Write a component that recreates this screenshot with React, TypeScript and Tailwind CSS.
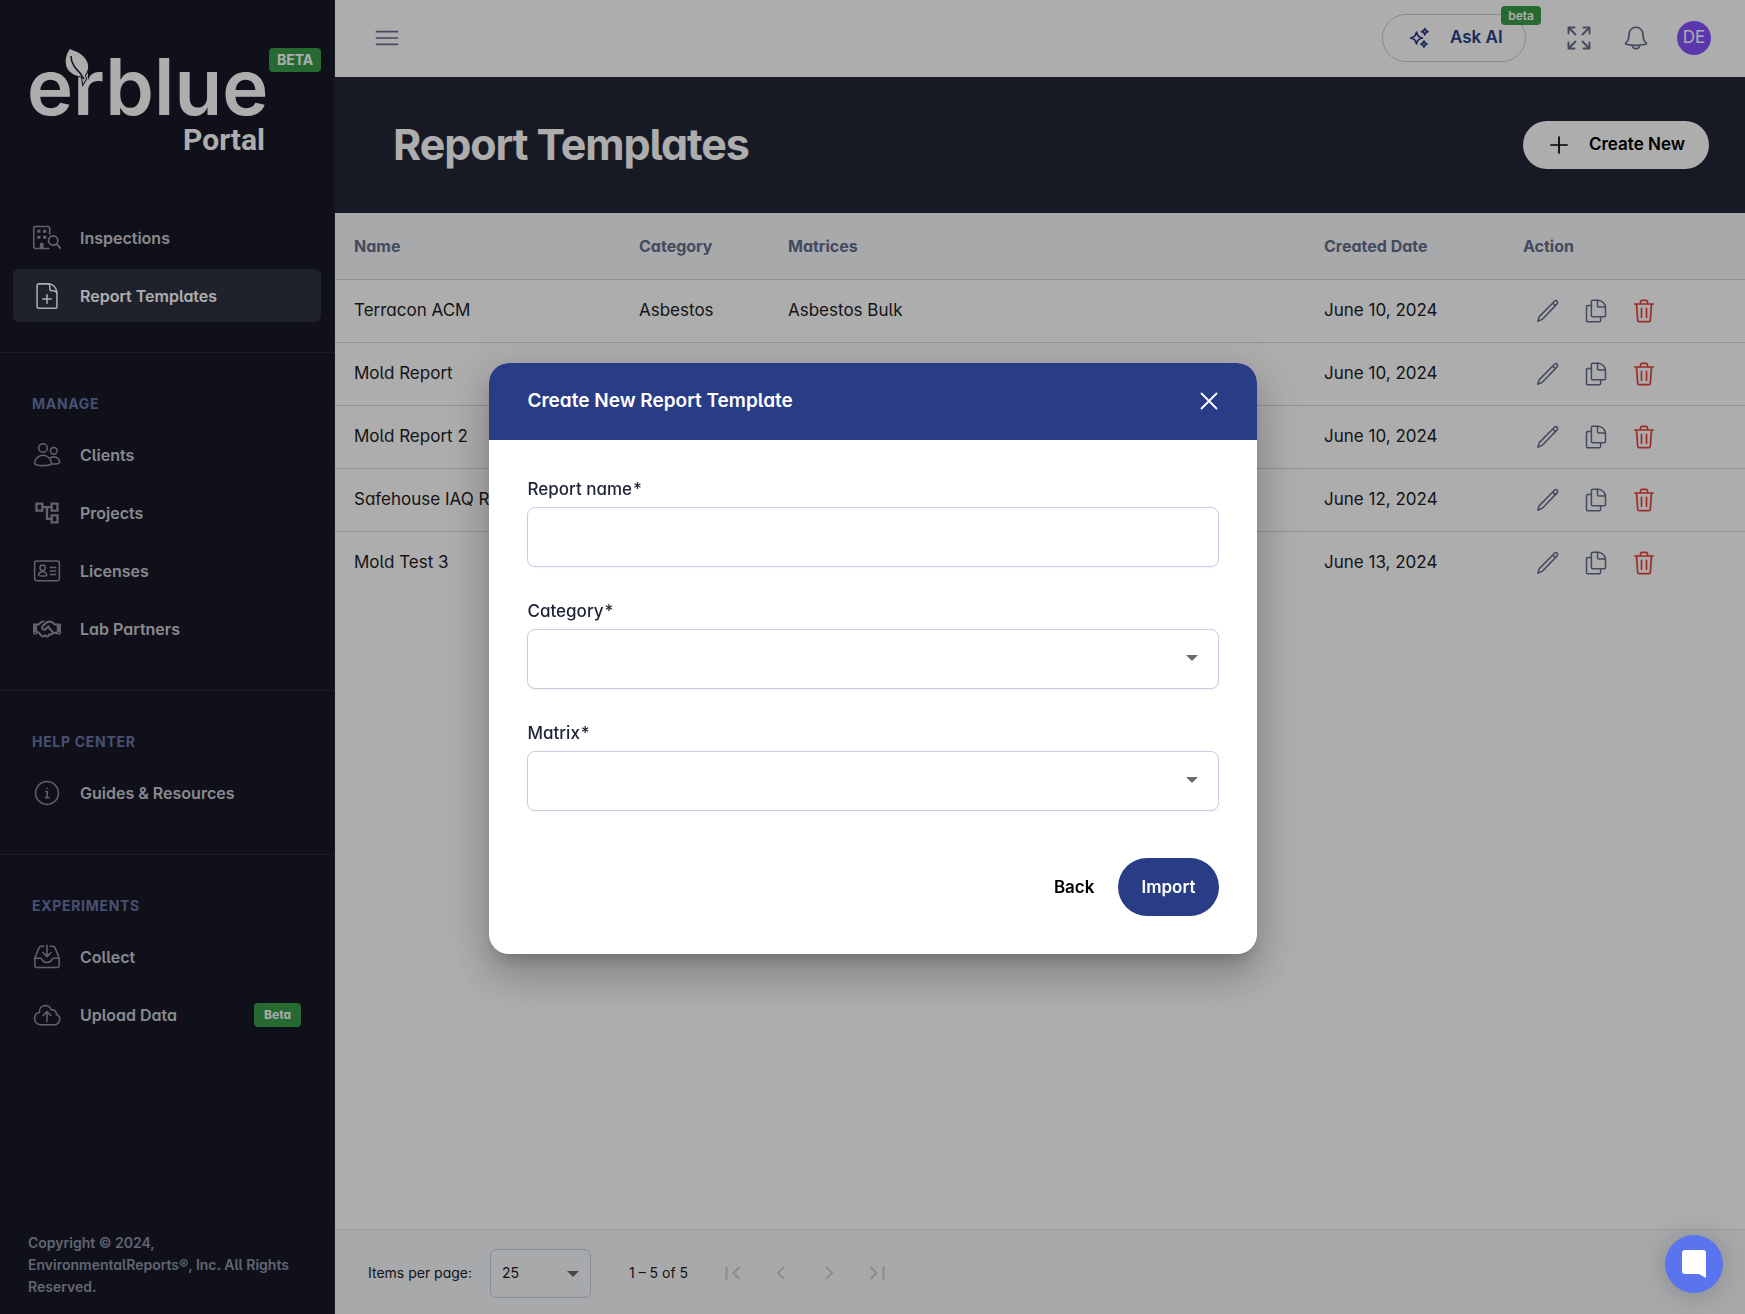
import React from "react";
import { FaRegHandshake } from "react-icons/fa6";
import { MdOutlineAccountTree } from "react-icons/md";

type IconProps = { className?: string; children?: React.ReactNode };

function Icon({ className = "size-6", children }: IconProps) {
  return (
    <svg
      viewBox="0 0 24 24"
      className={className}
      fill="none"
      stroke="currentColor"
      strokeWidth="1.3"
      strokeLinecap="round"
      strokeLinejoin="round"
      aria-hidden="true"
    >
      {children}
    </svg>
  );
}

function BuildingSearchIcon() {
  return (
    <Icon className="size-7">
      <path d="M13.600 21H2.100a1.500 1.500 0 0 1-1.500-1.500V3.600a1.500 1.500 0 0 1 1.500-1.500h10.700a1.500 1.500 0 0 1 1.500 1.500v5" strokeWidth="1.400" />
      <path d="M3.600 5h2.800v2.600H3.600zM8.600 5h2.800v2.600H8.600zM3.600 10h2.800v2.600H3.600zM8.600 10h2.800v2.600H8.600zM5.800 21v-3.500a1.700 1.700 0 0 1 3.400 0V21z" fill="currentColor" stroke="none" />
      <circle cx="17.300" cy="14.200" r="4" strokeWidth="1.500" />
      <path d="m20.300 17.200 3.200 3.400" strokeWidth="1.700" />
    </Icon>
  );
}

function DocumentPlusIcon() {
  return (
    <Icon className="size-7">
      <path d="M13.500 1.600H5a1.500 1.500 0 0 0-1.500 1.500v17.800A1.500 1.500 0 0 0 5 22.400h14a1.500 1.500 0 0 0 1.500-1.500V9.500c0-4.500-3.500-7.900-7-7.900z" />
      <path d="M13 1.600c1 .4 1.400 1 1.400 2.200v2a1.600 1.600 0 0 0 1.600 1.600h1.500c1.800 0 2.600.8 3 2.200M12 11v7.200M8.400 14.600h7.200" />
    </Icon>
  );
}

function ClientsIcon() {
  return (
    <Icon className="size-7">
      <circle cx="8.600" cy="6" r="3.700" />
      <circle cx="17.800" cy="8.400" r="2.900" />
      <path d="M1.400 19.300c0-4 3.200-7 7.200-7s7.200 3 7.200 7c0 1-3.200 1.800-7.200 1.800s-7.200-.8-7.200-1.800zM14.200 14.800c1.100-.9 2.300-1.200 3.600-1.200 2.800 0 5 2.100 5 4.800 0 .9-2.900 1.600-7.100 1.300" />
    </Icon>
  );
}

function LicenseIcon() {
  return (
    <Icon className="size-7">
      <rect x="1.400" y="3.500" width="21.200" height="16.800" rx="1.800" />
      <circle cx="8.300" cy="9.200" r="2.300" />
      <path d="M4.800 15.600c0-1.800 1.500-2.900 3.500-2.900s3.500 1.100 3.500 2.900c0 .9-7 .9-7 0zM14.800 9h4.500M14.800 12h4.500M14.800 15h4.500" />
    </Icon>
  );
}

function InfoIcon() {
  return (
    <Icon className="size-7">
      <circle cx="12" cy="12" r="9.800" />
      <path d="M11 10.800h1.200v5M10.700 16h3" />
      <circle cx="12" cy="8" r=".7" fill="currentColor" stroke="none" />
    </Icon>
  );
}

function CollectIcon() {
  return (
    <Icon className="size-7">
      <path d="M9.200 2.800H6.800c-.8 0-1.300.4-1.600 1.200L1.600 12.600v6.700a1.700 1.700 0 0 0 1.700 1.700h17.400a1.700 1.700 0 0 0 1.700-1.700v-6.700L18.800 4c-.3-.8-.8-1.200-1.600-1.200h-2.400" />
      <path d="M1.800 13h4.600c1 0 1.200.5 1.500 1.400.5 1.500 1.600 2.300 4.100 2.300s3.600-.8 4.100-2.300c.3-.9.500-1.400 1.500-1.400h4.600M12 2v9.600M8.500 8.200l3.500 3.500 3.500-3.500" />
    </Icon>
  );
}

function CloudUploadIcon() {
  return (
    <Icon className="size-7">
      <path d="M6.200 20.300h11.600a4.700 4.700 0 0 0 2.200-9c.2-2.700-2.300-4.300-4.300-3.600C14.700 5 12.600 3.600 10.300 3.800c-3.200.3-5 3-4.800 6-2.500.4-4.100 2.600-4.100 5.100 0 3 2 5.400 4.800 5.400zM12 17.500V9.200M8.700 12.400 12 9.100l3.300 3.300" />
    </Icon>
  );
}

function MenuIcon() {
  return (
    <Icon className="size-[26px]">
      <path d="M2.300 6.200h19.400M2.300 12h19.400M2.300 17.800h19.400" strokeWidth="1.600" />
    </Icon>
  );
}

function SparklesIcon() {
  return (
    <Icon>
      <path d="M9.500 6c.9 4 2 5.100 6 6-4 .9-5.100 2-6 6-.9-4-2-5.100-6-6 4-.9 5.100-2 6-6zM17.800 2.500c.4 2 1.200 2.800 3.200 3.200-2 .4-2.800 1.200-3.200 3.200-.4-2-1.200-2.800-3.200-3.200 2-.4 2.800-1.200 3.200-3.200zM17 15c.4 2 1.100 2.700 3 3.100-1.900.4-2.600 1.100-3 3-.4-1.900-1.100-2.600-3-3 1.900-.4 2.600-1.100 3-3.100z" strokeWidth="1.700" />
    </Icon>
  );
}

function ExpandIcon() {
  return (
    <Icon>
      <path d="M1.500 7.500v-6h6M1.500 1.500 8.500 8.500M16.500 1.500h6v6M22.500 1.500l-7 7M1.500 16.500v6h6M1.500 22.500l7-7M22.500 16.500v6h-6M22.500 22.500l-7-7" strokeWidth="1.900" />
    </Icon>
  );
}

function BellIcon() {
  return (
    <Icon>
      <path d="M12 1.300c-4.400 0-7 3.300-7 7.300 0 4.500-.8 6.700-3.200 8.400-.6.500-.4 1 .4 1.200 6 1.400 13.600 1.400 19.600 0 .8-.2 1-.7.400-1.200C19.800 15.300 19 13.100 19 8.600c0-4-2.600-7.300-7-7.300zM8.200 19.400c.4 2.300 1.800 3.300 3.800 3.300s3.400-1 3.800-3.300" strokeWidth="1.600" />
    </Icon>
  );
}

function PencilIcon() {
  return (
    <Icon>
      <path d="M1.800 22.200l1.500-4.600L18.500 2.300c.9-.9 2-.9 2.700-.1s.7 1.900-.1 2.700L6.100 20.400zM16.700 4.100l2.800 2.700" strokeWidth="1.500" />
    </Icon>
  );
}

function CopyIcon() {
  return (
    <Icon>
      <path d="M14 1.200H8.700a1.300 1.300 0 0 0-1.300 1.300v14a1.300 1.300 0 0 0 1.300 1.300h11.500a1.300 1.300 0 0 0 1.300-1.300V8.500c0-3.500-3.500-7.300-7.500-7.300z" strokeWidth="1.500" />
      <path d="M13.500 1.200v5.200a1.500 1.500 0 0 0 1.500 1.500h6.300M7.400 6.500H3.800a1.300 1.300 0 0 0-1.300 1.300v13.700a1.300 1.300 0 0 0 1.300 1.300h11.500a1.300 1.300 0 0 0 1.300-1.300v-3.700" strokeWidth="1.500" />
    </Icon>
  );
}

function TrashIcon() {
  return (
    <Icon>
      <path d="M2.800 5h18.400M4.500 5l1.200 16.500c.1.800.6 1.200 1.400 1.200h9.800c.8 0 1.300-.4 1.400-1.200L19.500 5M8.200 5l.5-2.700c.1-.7.500-1 1.200-1h4.200c.7 0 1.100.3 1.200 1L15.800 5M9.500 9.300v9M14.500 9.300v9" strokeWidth="1.700" />
    </Icon>
  );
}

function Caret({ className = "" }: { className?: string }) {
  return (
    <svg
      viewBox="0 0 12 6"
      className={`pointer-events-none absolute h-[6px] w-3 ${className}`}
      fill="#6b6b6b"
      aria-hidden="true"
    >
      <path d="M0 0h12L6 6z" />
    </svg>
  );
}

function Logo() {
  return (
    <svg
      viewBox="-6 -12 246 132"
      className="h-[132px] w-[246px]"
      fill="#fff"
      role="img"
      aria-label="erblue Portal"
    >
      <text
        x="-2"
        y="70"
        fontFamily="Inter, sans-serif"
        fontSize="78"
        fontWeight="600"
        className="[font-feature-settings:normal]"
      >
        erblue
      </text>
      <text
        x="236"
        y="105"
        textAnchor="end"
        fontFamily="Roboto, sans-serif"
        fontSize="30"
        fontWeight="700"
      >
        Portal
      </text>
      {/* leaf growing out of the r */}
      <path
        d="M41 4C36 10 35 20 40 26c4 4 9 5 13 6l1 7 3-5-1-4c5-6 4-13-2-19C50 7 45 6 41 4z"
        stroke="#181928"
        strokeWidth="2"
        paintOrder="stroke"
      />
      <path
        d="M42 11c0 8 5 13 9 17l4 6"
        fill="none"
        stroke="#181928"
        strokeWidth="1.500"
      />
    </svg>
  );
}

type NavItem = {
  label: string;
  icon: React.ReactNode;
  active?: boolean;
  badge?: string;
};

const mainNav: NavItem[] = [
  { label: "Inspections", icon: <BuildingSearchIcon /> },
  { label: "Report Templates", icon: <DocumentPlusIcon />, active: true },
];

const sections: { title: string; items: NavItem[] }[] = [
  {
    title: "Manage",
    items: [
      { label: "Clients", icon: <ClientsIcon /> },
      { label: "Projects", icon: <MdOutlineAccountTree className="size-7" /> },
      { label: "Licenses", icon: <LicenseIcon /> },
      { label: "Lab Partners", icon: <FaRegHandshake className="size-7" /> },
    ],
  },
  {
    title: "Help Center",
    items: [{ label: "Guides & Resources", icon: <InfoIcon /> }],
  },
  {
    title: "Experiments",
    items: [
      { label: "Collect", icon: <CollectIcon /> },
      { label: "Upload Data", icon: <CloudUploadIcon />, badge: "Beta" },
    ],
  },
];

const templates = [
  { name: "Terracon ACM", category: "Asbestos", matrices: "Asbestos Bulk", date: "June 10, 2024" },
  { name: "Mold Report", category: "Mold", matrices: "Mold Air", date: "June 10, 2024" },
  { name: "Mold Report 2", category: "Mold", matrices: "Mold Air", date: "June 10, 2024" },
  { name: "Safehouse IAQ Report", category: "Mold", matrices: "Mold Air", date: "June 12, 2024" },
  { name: "Mold Test 3", category: "Mold", matrices: "Mold Air", date: "June 13, 2024" },
];

function NavList({ items }: { items: NavItem[] }) {
  return (
    <ul className="flex flex-col gap-[5px] px-[13px]">
      {items.map((item) => (
        <li key={item.label}>
          <a
            href="#"
            className={`flex h-[53px] items-center rounded-md px-5 font-semibold ${
              item.active ? "bg-[#2e3242] text-white" : "text-[#cbcbd0]"
            }`}
          >
            <span className={item.active ? "text-white" : "text-[#8f919f]"}>
              {item.icon}
            </span>
            <span className="ml-[19px]">{item.label}</span>
            {item.badge && (
              <span className="ml-auto flex h-6 items-center rounded bg-[#389c49] px-[10px] text-xs font-bold text-white">
                {item.badge}
              </span>
            )}
          </a>
        </li>
      ))}
    </ul>
  );
}

function Sidebar() {
  return (
    <aside className="flex w-[335px] shrink-0 flex-col border-r border-[#232636] bg-[#181928]">
      <div className="flex h-[211px] items-start pt-[33px] pl-[23px]">
        <Logo />
        <span className="mt-[15px] flex h-6 items-center rounded bg-[#389c49] px-2 text-sm font-bold text-white">
          BETA
        </span>
      </div>
      <nav>
        <div className="pb-[30px]">
          <NavList items={mainNav} />
        </div>
        {sections.map((section) => (
          <div
            key={section.title}
            className="border-t border-[#2a2c3f] pt-[41px] pb-[35px]"
          >
            <h2 className="mb-[14px] pl-8 text-sm leading-5 font-bold tracking-wider text-[#6a76a9] uppercase">
              {section.title}
            </h2>
            <NavList items={section.items} />
          </div>
        ))}
      </nav>
      <p className="mt-auto px-7 pb-4 text-sm leading-[22px] font-semibold text-[#8f96a8]">
        Copyright © 2024,
        <br />
        EnvironmentalReports®, Inc. All Rights Reserved.
      </p>
    </aside>
  );
}

function TopBar() {
  return (
    <header className="flex h-[77px] shrink-0 items-center bg-white px-[34px] pb-px text-[#646e8c]">
      <button type="button" aria-label="Toggle navigation" className="ml-[5px]">
        <MenuIcon />
      </button>
      <div className="ml-auto flex items-center">
        <div className="relative">
          <button
            type="button"
            className="flex h-12 w-36 items-center gap-[19px] rounded-full border border-[#c8cde0] pl-6 text-[17px] font-semibold text-[#293d87] [font-feature-settings:normal]"
          >
            <SparklesIcon />
            Ask AI
          </button>
          <span className="absolute -top-2 -right-[15px] flex h-[19px] items-center rounded bg-[#389c49] px-[7px] text-xs font-semibold text-white [font-feature-settings:normal]">
            beta
          </span>
        </div>
        <button type="button" aria-label="Full screen" className="ml-[39px] p-[2px]">
          <ExpandIcon />
        </button>
        <button type="button" aria-label="Notifications" className="ml-[29px] p-[2px]">
          <BellIcon />
        </button>
        <button
          type="button"
          aria-label="Account"
          className="ml-[27px] flex size-[34px] items-center justify-center rounded-full bg-[#8552ff] text-[17px] text-white"
        >
          DE
        </button>
      </div>
    </header>
  );
}

function TemplatesTable() {
  return (
    <table className="w-full table-fixed border-collapse text-left text-[17px] text-[#1c1c1e]">
      <thead className="bg-slate-50 text-base text-[#646e8c]">
        <tr className="h-[66px] border-b border-[#d8d8d8]">
          <th className="w-[285px] pl-[19px] font-bold">Name</th>
          <th className="w-[149px] pl-[19px] font-bold">Category</th>
          <th className="pl-[19px] font-bold">Matrices</th>
          <th className="w-[199px] pl-[19px] font-bold">Created Date</th>
          <th className="w-[241px] pl-[19px] font-bold">Action</th>
        </tr>
      </thead>
      <tbody>
        {templates.map((row) => (
          <tr
            key={row.name}
            className="h-[63px] border-b border-[#d8d8d8] last:border-b-0"
          >
            <td className="pl-[19px] whitespace-nowrap">{row.name}</td>
            <td className="pl-[19px]">{row.category}</td>
            <td className="pl-[19px]">{row.matrices}</td>
            <td className="pl-[19px]">{row.date}</td>
            <td className="pl-[19px]">
              <div className="flex gap-6 pl-[13px] text-[#646e8c]">
                <button type="button" aria-label="Edit">
                  <PencilIcon />
                </button>
                <button type="button" aria-label="Duplicate">
                  <CopyIcon />
                </button>
                <button type="button" aria-label="Delete" className="text-[#e5433a]">
                  <TrashIcon />
                </button>
              </div>
            </td>
          </tr>
        ))}
      </tbody>
    </table>
  );
}

function PageButton({ label, d }: { label: string; d: string }) {
  return (
    <button type="button" disabled aria-label={label} className="text-[#cfcfd1]">
      <Icon>
        <path d={d} strokeWidth="2" strokeLinecap="butt" strokeLinejoin="miter" />
      </Icon>
    </button>
  );
}

function Paginator() {
  return (
    <footer className="mt-auto flex h-[85px] shrink-0 items-center border-t border-slate-200 bg-slate-50 pt-[2px] pl-[33px] text-sm text-[#1c1c1e]">
      <label htmlFor="page-size">Items per page:</label>
      <div className="relative ml-[18px]">
        <select
          id="page-size"
          defaultValue="25"
          className="h-[49px] w-[101px] appearance-none rounded-md border border-[#c8cde0] pl-[11px]"
        >
          <option>25</option>
          <option>50</option>
        </select>
        <Caret className="top-[22px] right-3" />
      </div>
      <span className="ml-[38px]">1 – 5 of 5</span>
      <div className="ml-[33px] flex gap-6">
        <PageButton label="First page" d="M5.500 5.500v13M18.500 6l-6 6 6 6" />
        <PageButton label="Previous page" d="M15 6l-6 6 6 6" />
        <PageButton label="Next page" d="M9 6l6 6-6 6" />
        <PageButton label="Last page" d="M5.500 6l6 6-6 6M18.500 5.500v13" />
      </div>
    </footer>
  );
}

const fieldClass =
  "h-[60px] w-full appearance-none rounded-lg border border-[#c8cde0] bg-white px-4 shadow-xs";

function CreateDialog() {
  return (
    <div
      role="dialog"
      aria-modal="true"
      aria-labelledby="dialog-title"
      className="w-full max-w-3xl overflow-hidden rounded-[20px] bg-white text-[17px] text-[#1e2235] shadow-[0_11px_15px_-7px_rgba(0,0,0,0.2),0_24px_38px_3px_rgba(0,0,0,0.14),0_9px_46px_8px_rgba(0,0,0,0.12)]"
    >
      <div className="flex h-[77px] items-center justify-between bg-[#293d87] pr-[34px] pl-[39px] text-white">
        <h2 id="dialog-title" className="text-[19px] font-semibold">
          Create New Report Template
        </h2>
        <button type="button" aria-label="Close" className="p-[2px]">
          <Icon>
            <path d="M4.500 4.500l15 15M19.500 4.500l-15 15" strokeWidth="1.800" />
          </Icon>
        </button>
      </div>
      <form className="px-[38px] pt-[37px] pb-[38px] leading-6">
        <div className="flex flex-col gap-8 font-medium">
          <div className="flex flex-col gap-[6px]">
            <label htmlFor="report-name" className="pl-px">
              Report name<span className="ml-px">*</span>
            </label>
            <input id="report-name" type="text" className={fieldClass} />
          </div>
          <div className="flex flex-col gap-[6px]">
            <label htmlFor="category" className="pl-px">
              Category<span className="ml-px">*</span>
            </label>
            <div className="relative">
              <select id="category" className={fieldClass} />
              <Caret className="top-[26px] right-[21px]" />
            </div>
          </div>
          <div className="flex flex-col gap-[6px]">
            <label htmlFor="matrix" className="pl-px">
              Matrix<span className="ml-px">*</span>
            </label>
            <div className="relative">
              <select id="matrix" className={fieldClass} />
              <Caret className="top-[26px] right-[21px]" />
            </div>
          </div>
        </div>
        <div className="mt-[47px] flex justify-end gap-6 font-semibold [font-feature-settings:normal]">
          <button type="button" className="text-black">
            Back
          </button>
          <button
            type="button"
            className="h-[58px] rounded-full bg-[#293d87] px-[23px] text-white"
          >
            Import
          </button>
        </div>
      </form>
    </div>
  );
}

export default function App() {
  return (
    <div className="flex min-h-screen bg-white font-['Inter',sans-serif] text-base [font-feature-settings:'cv05','cv11']">
      <Sidebar />
      <main className="flex min-w-0 flex-1 flex-col">
        <TopBar />
        <div className="flex h-[136px] shrink-0 items-center justify-between bg-[#232636] pr-9 pl-[58px]">
          <h1 className="pb-[2px] text-[43px] font-bold tracking-tight text-white">
            Report Templates
          </h1>
          <button
            type="button"
            className="flex h-12 items-center gap-[18px] rounded-full bg-white px-6 text-[17px] font-semibold text-black [font-feature-settings:normal]"
          >
            <Icon>
              <path d="M12 4v16M4 12h16" strokeWidth="1.700" />
            </Icon>
            Create New
          </button>
        </div>
        <TemplatesTable />
        <Paginator />
      </main>

      {/* Dimmed backdrop with the dialog on top */}
      <div className="fixed inset-0 z-10 flex items-center justify-center bg-black/32 pt-[2px]">
        <CreateDialog />
      </div>

      <button
        type="button"
        aria-label="Open chat"
        className="fixed right-[22px] bottom-[21px] z-20 flex size-[58px] items-center justify-center rounded-full bg-[#5a73ee] shadow-[0_2px_28px_rgba(0,0,0,0.2)]"
      >
        <svg viewBox="0 0 26 30" className="h-[30px] w-[26px]" fill="#fff" aria-hidden="true">
          <path d="M4 1h18a3 3 0 0 1 3 3v25l-7-4H4a3 3 0 0 1-3-3V4a3 3 0 0 1 3-3z" />
        </svg>
      </button>
    </div>
  );
}
